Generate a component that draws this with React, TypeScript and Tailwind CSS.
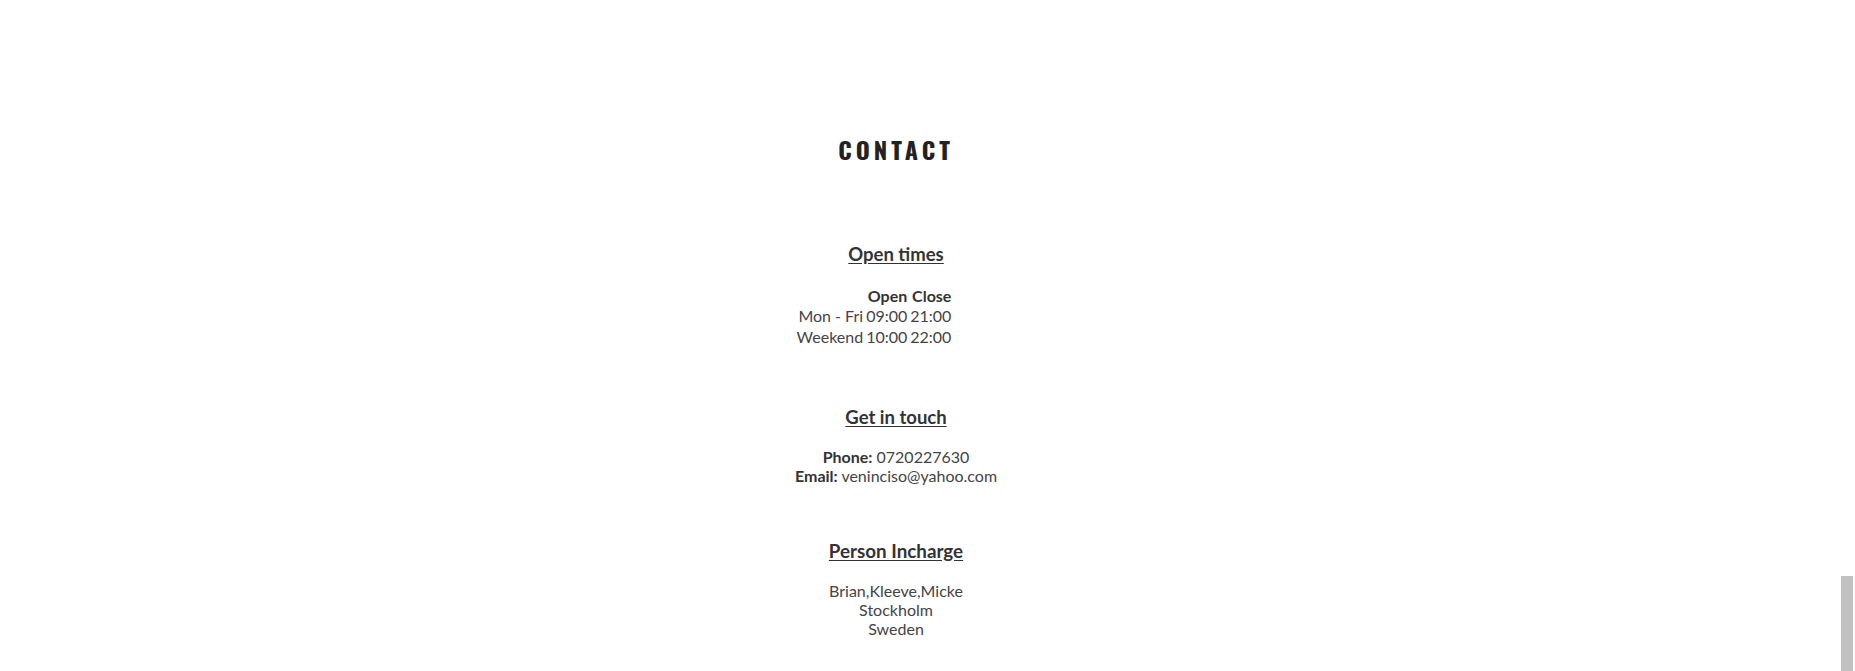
export default function App() {
  return (
    <div className="relative h-[671px] overflow-hidden bg-white font-['Lato','Noto_Sans',sans-serif] text-[#444]">
      <div className="w-[1792px] pt-[134px] text-center">
        {/* Title */}
        <h2 className="font-['Oswald','DejaVu_Sans_Condensed',sans-serif] text-[24px] font-bold leading-[30px] tracking-[4px] text-[#222]">
          CONTACT
        </h2>

        {/* Open times */}
        <section className="mt-[79px]">
          <h3 className="text-[18.5px] font-bold leading-[22px] text-[#333] underline underline-offset-[2px]">Open times</h3>
          <div className="mt-[20.5px] mr-[44px] inline-grid grid-cols-[auto_auto_auto] gap-x-[3px] text-right text-[16px] leading-[20.5px]">
            <span />
            <span className="font-bold text-[#333]">Open</span>
            <span className="font-bold text-[#333]">Close</span>
            <span>Mon - Fri</span>
            <span>09:00</span>
            <span>21:00</span>
            <span>Weekend</span>
            <span>10:00</span>
            <span>22:00</span>
          </div>
        </section>

        {/* Get in touch */}
        <section className="mt-[59px]">
          <h3 className="text-[18.5px] font-bold leading-[22px] text-[#333] underline underline-offset-[2px]">Get in touch</h3>
          <div className="mt-[18.5px] text-[16px] leading-[19px]">
            <p>
              <b className="text-[#333]">Phone:</b> 0720227630
            </p>
            <p>
              <b className="text-[#333]">Email:</b> veninciso@yahoo.com
            </p>
          </div>
        </section>

        {/* Person incharge */}
        <section className="mt-[55px]">
          <h3 className="text-[18.8px] font-bold leading-[22px] text-[#333] underline underline-offset-[2px]">Person Incharge</h3>
          <div className="mt-[19.5px] text-[16px] leading-[19px]">
            <p>Brian,Kleeve,Micke</p>
            <p>Stockholm</p>
            <p>Sweden</p>
          </div>
        </section>
      </div>

      {/* scrollbar thumb */}
      <div className="absolute right-[2px] top-[576px] h-[95px] w-[12px] bg-[#c1c1c1]" />
    </div>
  );
}
